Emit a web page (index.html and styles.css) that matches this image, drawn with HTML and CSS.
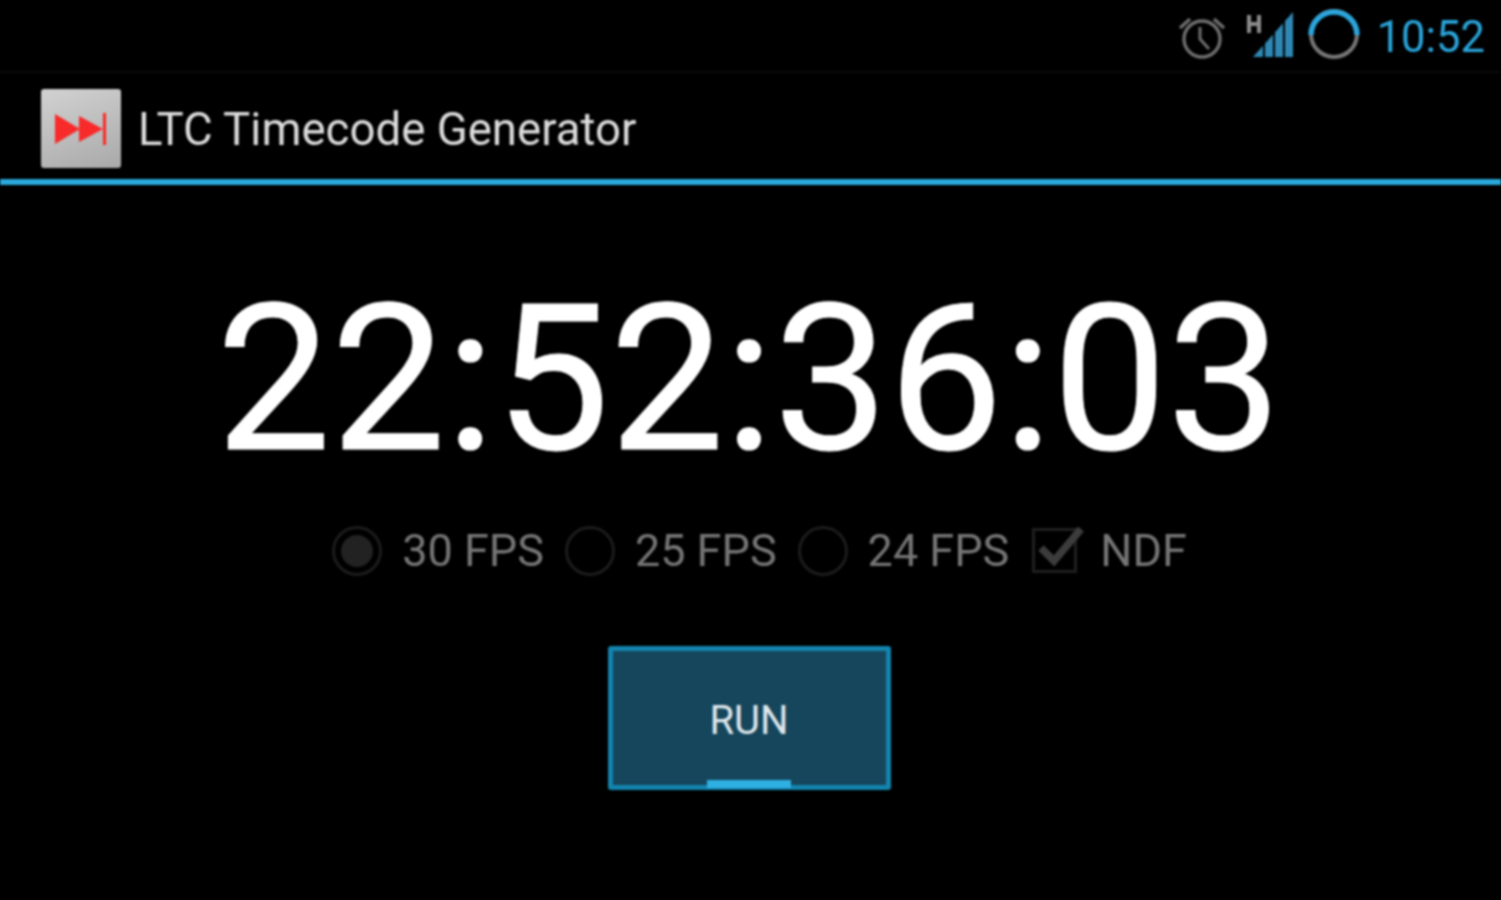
FILE: index.html
```html
<!DOCTYPE html>
<html lang="en">
<head>
<meta charset="utf-8">
<title>LTC Timecode Generator</title>
<link rel="stylesheet" href="styles.css">
</head>
<body>
<div class="screen">
  <header class="status">
    <svg class="ic-alarm" viewBox="0 0 48 48" width="48" height="48">
      <circle cx="24" cy="26" r="18" fill="none" stroke="#6e6e6e" stroke-width="3.4"/>
      <path d="M22 14V26L31 36" fill="none" stroke="#6e6e6e" stroke-width="3"/>
      <path d="M2 15L12 6M46 15L36 6" fill="none" stroke="#6e6e6e" stroke-width="3.4"/>
    </svg>
    <svg class="ic-signal" viewBox="0 0 50 48" width="50" height="48">
      <path d="M3 5V23M13 5V23M3 14H13" fill="none" stroke="#8c8c8c" stroke-width="4"/>
      <path d="M7 47L17 35.75V47Z" fill="#2f88b4"/>
      <path d="M19 33.5L27 24.5V47H19Z" fill="#2f88b4"/>
      <path d="M29 22.25L37 13.25V47H29Z" fill="#2f88b4"/>
      <path d="M39 11L47 2V47H39Z" fill="#2f88b4"/>
    </svg>
    <svg class="ic-battery" viewBox="0 0 52 52" width="52" height="52">
      <circle cx="26" cy="26" r="23" fill="none" stroke="#777" stroke-width="4"/>
      <path d="M3 27A23 23 0 1 1 49 27" fill="none" stroke="#2aa5dc" stroke-width="5.5"/>
    </svg>
    <span class="clock">10:52</span>
  </header>
  <div class="actionbar">
    <div class="app-icon">
      <svg viewBox="0 0 54 32" width="54" height="32">
        <path d="M1 1L26 16L1 31Z" fill="#f82a2a"/>
        <path d="M25 3L49 16L25 29Z" fill="#f82a2a"/>
        <rect x="49" y="0" width="3" height="32" fill="#f82a2a"/>
      </svg>
    </div>
    <h1 class="title">LTC Timecode Generator</h1>
  </div>
  <main class="content">
    <div class="timecode">22:52:36:03</div>
    <div class="options">
      <div class="opt"><span class="radio radio-on"></span><span class="label">30 FPS</span></div>
      <div class="opt"><span class="radio"></span><span class="label">25 FPS</span></div>
      <div class="opt"><span class="radio"></span><span class="label">24 FPS</span></div>
      <div class="opt opt-check">
        <svg class="check" viewBox="0 0 54 50" width="54" height="50">
          <rect x="2.5" y="3.5" width="42" height="42" fill="none" stroke="#1f1f1f" stroke-width="3"/>
          <path d="M10 22L23 35L50 3" fill="none" stroke="#3c3c3c" stroke-width="7.5"/>
        </svg>
        <span class="label">NDF</span>
      </div>
    </div>
    <button class="run" type="button">RUN<span class="run-mark"></span></button>
  </main>
</div>
</body>
</html>
```
FILE: styles.css
```css
* { box-sizing: border-box; }
html, body { margin: 0; height: 100%; background: #000; overflow: hidden; }
.screen {
  width: 1501px;
  height: 900px;
  background: #000;
  font-family: Roboto, "Liberation Sans", sans-serif;
  display: flex;
  flex-direction: column;
  filter: blur(1.1px);
}
.status {
  height: 73px;
  border-bottom: 2px solid #0c0c0c;
  display: flex;
  align-items: center;
  justify-content: flex-end;
  padding-right: 16px;
}
.ic-alarm { margin-right: 20px; margin-top: 2px; }
.ic-signal { margin-right: 12px; margin-top: -3px; }
.ic-battery { margin-right: 17px; margin-top: -3px; }
.clock { font-size: 43.5px; line-height: 72px; color: #2aa5dc; padding-top: 4px; }
.actionbar {
  height: 112px;
  border-bottom: 6px solid #2aa9dc;
  display: flex;
  align-items: center;
  padding: 5px 0 0 41px;
}
.app-icon {
  width: 80px;
  height: 79px;
  border-radius: 3px;
  background: linear-gradient(160deg, #d2d2d2, #a9a9a9);
  display: flex;
  align-items: center;
  justify-content: center;
}
.title {
  margin: 2px 0 0 17px;
  font-size: 45.6px;
  font-weight: 400;
  color: #dcdcdc;
}
.content { display: flex; flex-direction: column; align-items: center; }
.timecode {
  margin: 75px 3px 0 0;
  font-size: 204px;
  line-height: 240px;
  color: #fff;
  -webkit-text-stroke: 1px #fff;
}
.options {
  margin-top: 21px;
  display: flex;
  align-items: center;
  gap: 21px;
  height: 60px;
  padding-left: 18px;
}
.opt { display: flex; align-items: center; gap: 20px; }
.opt-check { gap: 15px; margin-left: 1px; }
.label { font-size: 45px; line-height: 60px; color: #757575; }
.radio {
  width: 50px;
  height: 50px;
  border-radius: 50%;
  border: 3px solid #1c1c1c;
  display: flex;
  align-items: center;
  justify-content: center;
}
.radio-on::before {
  content: "";
  width: 32px;
  height: 32px;
  border-radius: 50%;
  background: #222;
}
.run {
  position: relative;
  margin: 65px 3px 0 0;
  width: 283px;
  height: 144px;
  background: #15465c;
  border: 5px solid #1384ae;
  border-radius: 3px;
  color: #dfe6ea;
  font-family: inherit;
  font-size: 40px;
  padding: 4px 0 0;
}
.run-mark {
  position: absolute;
  left: 94px;
  bottom: -3px;
  width: 84px;
  height: 8px;
  background: #2fb0e2;
}
```
